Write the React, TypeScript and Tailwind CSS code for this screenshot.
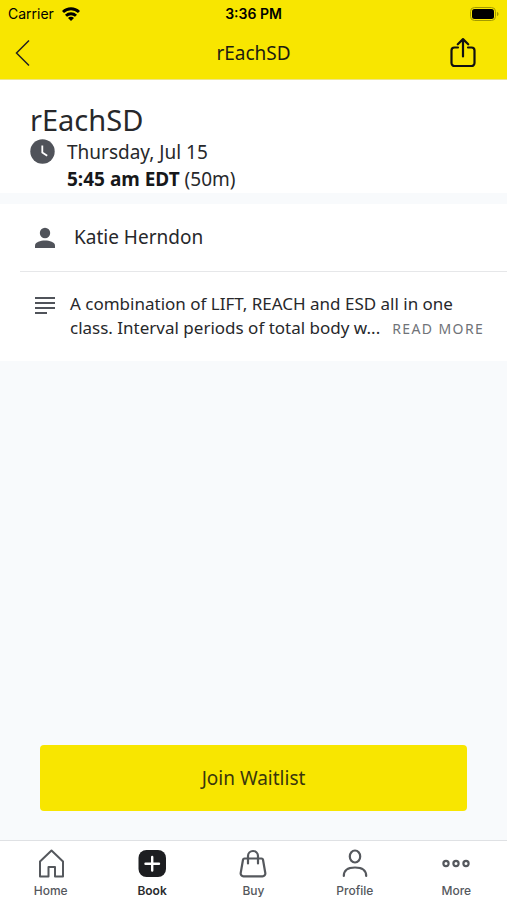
import React from "react";

const tabs = [
    {label: "Home", icon: <HomeIcon/>},
    {label: "Book", icon: <BookIcon/>, active: true},
    {label: "Buy", icon: <BagIcon/>},
    {label: "Profile", icon: <ProfileIcon/>},
    {label: "More", icon: <MoreIcon/>},
];

function HomeIcon() {
    return (
        <svg width="28" height="30" viewBox="0 0 28 30" fill="none" stroke="currentColor" strokeWidth="2" strokeLinejoin="round">
            <path d="M3 12.500 14.500 1.500 26 12.500V27.500h-8v-9.500h-6.500v9.500H3z"/>
        </svg>
    );
}

function BookIcon() {
    return (
        <svg width="28" height="30" viewBox="0 0 28 30" fill="none">
            <rect x="0.500" y="1" width="27.500" height="27" rx="8" fill="#1d1e21"/>
            <path d="M14.200 8v13.500M7.500 14.700H21" stroke="#fff" strokeWidth="2.400" strokeLinecap="round"/>
        </svg>
    );
}

function BagIcon() {
    return (
        <svg width="28" height="30" viewBox="0 0 28 30" fill="none" stroke="currentColor" strokeWidth="2.200" strokeLinecap="round" strokeLinejoin="round">
            <path d="M5.500 9.500h17a1.500 1.500 0 0 1 1.500 1.200l2.300 13.300a2.800 2.800 0 0 1-2.800 3.300H4.500A2.800 2.800 0 0 1 1.700 24L4 10.700A1.500 1.500 0 0 1 5.500 9.500z"/>
            <path d="M9 14.500V7a5 5 0 0 1 10 0v7.500"/>
        </svg>
    );
}

function ProfileIcon() {
    return (
        <svg width="28" height="30" viewBox="0 0 28 30" fill="none" stroke="currentColor" strokeWidth="2.200" strokeLinecap="round">
            <ellipse cx="14" cy="7.500" rx="5.200" ry="6"/>
            <path d="M2.800 27c0-5.500 4.200-8.500 11.200-8.500s11.200 3 11.200 8.500"/>
        </svg>
    );
}

function MoreIcon() {
    return (
        <svg width="28" height="30" viewBox="0 0 28 30" fill="none" stroke="currentColor" strokeWidth="2.200">
            <circle cx="4" cy="14.500" r="2.600"/>
            <circle cx="14" cy="14.500" r="2.600"/>
            <circle cx="24" cy="14.500" r="2.600"/>
        </svg>
    );
}

const StatusBar = () => (
    <div className="grid grid-cols-3 items-center h-7 px-2 font-['Inter',sans-serif] text-sm text-black">
        <div className="flex items-center gap-2">
            <span>Carrier</span>
            <svg width="18" height="14" viewBox="0 0 18 14" fill="none" stroke="#000" strokeWidth="2.900">
                <path d="M1 5a11.500 11.500 0 0 1 16 0"/>
                <path d="M4 8.700a7.200 7.200 0 0 1 10 0"/>
                <path d="M9 14 6 11a4.200 4.200 0 0 1 6 0z" fill="#000" stroke="none"/>
            </svg>
        </div>
        <span className="text-center font-semibold">3:36 PM</span>
        <svg className="justify-self-end" width="29" height="14" viewBox="0 0 29 14">
            <rect x="0.500" y="0.500" width="25" height="13" rx="4" fill="none" stroke="#a39a00"/>
            <rect x="2" y="2" width="22" height="10" rx="2.500" fill="#000"/>
            <path d="M27 5v4c2-.5 2-3.500 0-4z" fill="#a39a00"/>
        </svg>
    </div>
);

const App = () => {
    return (
        <div className="flex flex-col min-h-screen bg-[#f8fafc] font-['Noto_Sans',sans-serif] text-[#27282b]">
            <header className="bg-[#f8e600] border-b border-[#eee58a]">
                <StatusBar/>
                <div className="grid grid-cols-3 items-center h-[51px] px-3">
                    <button aria-label="Back" className="justify-self-start">
                        <svg width="20" height="28" viewBox="0 0 20 28" fill="none" stroke="#222" strokeWidth="1.500">
                            <path d="M17 .5 4.500 13 17 25.500"/>
                        </svg>
                    </button>
                    <h1 className="text-center text-[19px] text-[#1c1c10]">rEachSD</h1>
                    <button aria-label="Share" className="justify-self-end pr-4">
                        <svg width="32" height="32" viewBox="0 0 32 32" fill="none" stroke="#111" strokeWidth="2.200" strokeLinecap="round" strokeLinejoin="round">
                            <path d="M11 9.500H7.500A3 3 0 0 0 4.500 12.500v12.500a3 3 0 0 0 3 3h17a3 3 0 0 0 3-3V12.500a3 3 0 0 0-3-3H21"/>
                            <path d="M16 18.500V1.300M10.800 6.300 16 1.100l5.200 5.200"/>
                        </svg>
                    </button>
                </div>
            </header>

            <main className="flex flex-col flex-1">
                <section className="bg-white pt-5 px-[30px]">
                    <h2 className="text-[29px] leading-[39px]">rEachSD</h2>
                    <div className="flex gap-3 text-[19px] leading-[27px]">
                        <svg className="shrink-0" width="25" height="25" viewBox="0 0 25 25">
                            <circle cx="12.500" cy="12.500" r="12.200" fill="#50535a"/>
                            <path d="M12.300 6.500v7l4.900 3.300" fill="none" stroke="#fff" strokeWidth="1.800"/>
                        </svg>
                        <div>
                            <p>Thursday, Jul 15</p>
                            <p><strong className="font-bold text-[#17181a]">5:45 am EDT</strong> (50m)</p>
                        </div>
                    </div>
                </section>

                <section className="mt-[11px] bg-white pl-5">
                    <div className="flex items-center gap-4 h-[68px] pl-3 border-b border-[#e6e7e9] text-[19px]">
                        <svg className="shrink-0" width="26" height="26" viewBox="0 0 26 26" fill="#50535a">
                            <circle cx="13" cy="8" r="5.200"/>
                            <path d="M3 23v-2.500c0-3.300 5.500-5 10-5s10 1.700 10 5V23z"/>
                        </svg>
                        <span>Katie Herndon</span>
                    </div>
                    <div className="flex gap-3 py-5 pl-3 pr-4 text-[17px] leading-6">
                        <svg className="shrink-0 mt-1" width="26" height="26" viewBox="0 0 26 26" stroke="#50535a" strokeWidth="2.200">
                            <path d="M3 2h20M3 7h20M3 12h20M3 17h12"/>
                        </svg>
                        <div className="min-w-0">
                            <p>A combination of LIFT, REACH and ESD all in one</p>
                            <div className="flex items-baseline gap-3">
                                <p className="truncate">class. Interval periods of total body w...</p>
                                <button className="shrink-0 text-sm leading-6 tracking-widest text-[#707378]">READ MORE</button>
                            </div>
                        </div>
                    </div>
                </section>

                <div className="mt-auto px-10 pb-[29px]">
                    <button className="w-full h-[66px] rounded-sm bg-[#f8e600] text-[19px] text-[#3a370c]">Join Waitlist</button>
                </div>
            </main>

            <nav className="grid grid-cols-5 h-[60px] pt-2 bg-white border-t border-[#dfe1e4] font-['Inter',sans-serif]">
                {tabs.map((tab) => (
                    <a
                        key={tab.label}
                        href="#"
                        className={tab.active
                            ? "flex flex-col items-center gap-1 text-xs font-semibold text-[#2b2c2f]"
                            : "flex flex-col items-center gap-1 text-xs font-medium text-[#55585d]"}
                    >
                        {tab.icon}
                        <span>{tab.label}</span>
                    </a>
                ))}
            </nav>
        </div>
    );
};

export default App;
